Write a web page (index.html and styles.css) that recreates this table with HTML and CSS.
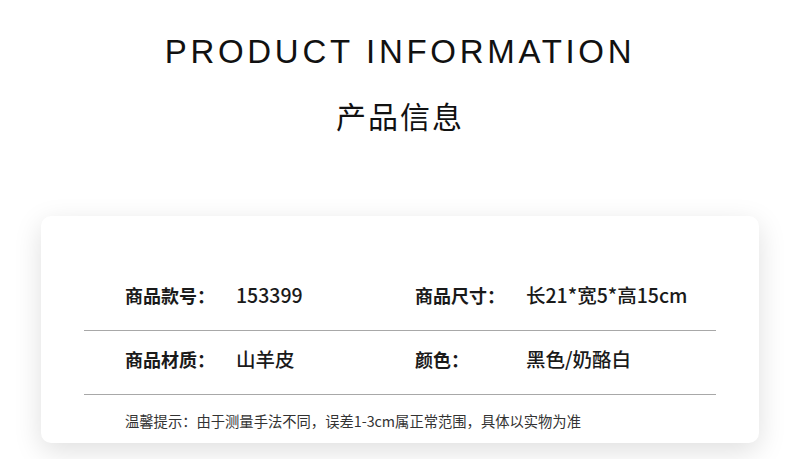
FILE: index.html
```html
<!DOCTYPE html>
<html lang="zh-CN">
<head>
  <meta charset="UTF-8" />
  <meta name="viewport" content="width=device-width, initial-scale=1.0"/>
  <title>产品信息</title>
  <link rel="stylesheet" href="styles.css">
</head>
<body>

<div class="page">
  <h1 class="title-en">PRODUCT INFORMATION</h1>
  <h2 class="title-cn">产品信息</h2>

  <div class="card">
    <div class="row">
      <div class="cell">
        <span class="label">商品款号：</span>
        <span class="value">153399</span>
      </div>
      <div class="cell">
        <span class="label">商品尺寸：</span>
        <span class="value">长21*宽5*高15cm</span>
      </div>
    </div>

    <div class="row">
      <div class="cell">
        <span class="label">商品材质：</span>
        <span class="value">山羊皮</span>
      </div>
      <div class="cell">
        <span class="label">颜色：</span>
        <span class="value">黑色/奶酪白</span>
      </div>
    </div>

    <p class="note">温馨提示：由于测量手法不同，误差1-3cm属正常范围，具体以实物为准</p>
  </div>
</div>

</body>
</html>
```

FILE: styles.css
```css
body {
  margin: 0; padding: 0;
  background: #fff;
  font-family: "Noto Sans CJK SC", "Liberation Sans", sans-serif;
  color: #1a1a1a;
}
.page {
  width: 800px; height: 459px; overflow: hidden;
}
.title-en {
  margin: 32px 0 0; height: 40px;
  font-family: "Liberation Sans", Arial, sans-serif;
  font-weight: 400; font-size: 33px; line-height: 40px;
  letter-spacing: 3.7px; text-align: center; color: #111;
}
.title-cn {
  margin: 28px 0 0; height: 30px;
  font-weight: 400; font-size: 30px; line-height: 30px;
  letter-spacing: 2px; text-align: center; color: #111;
}
.card {
  width: 718px; margin: 86px 0 0 41px;
  box-sizing: border-box;
  padding: 51px 43px 13px;
  background: #fff; border-radius: 10px;
  box-shadow: 0 8px 28px rgba(0,0,0,0.13);
}
.row {
  display: grid; grid-template-columns: 290px 1fr;
  padding: 15px 0 22px 41px;
  border-bottom: 1.5px solid #a8a8a8;
}
.cell {
  display: flex; align-items: center;
  font-size: 18px; line-height: 26px;
}
.label {
  width: 111px; flex-shrink: 0;
  font-weight: 700; color: #1a1a1a;
}
.value {
  font-size: 19.5px;
  font-weight: 500; color: #1a1a1a;
}
.note {
  margin: 17px 0 0 41px;
  font-size: 14.3px; line-height: 18px; color: #333;
}
```
